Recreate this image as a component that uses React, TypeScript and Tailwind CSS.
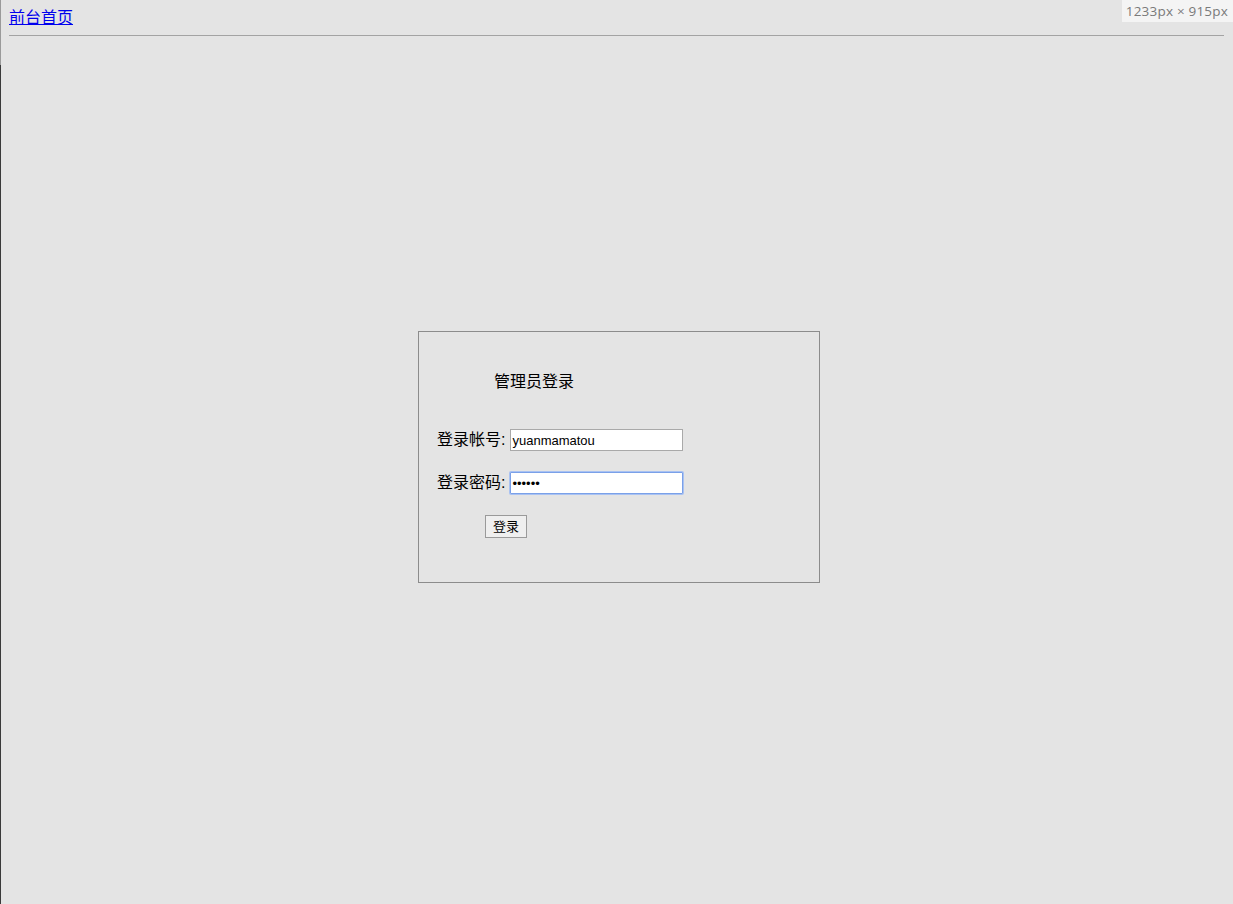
export default function App() {
  return (
    <div
      className="relative min-h-[904px] bg-[#e4e4e4] px-[9px] pt-[8px] text-black"
      style={{ fontFamily: '"Liberation Sans", "Noto Sans CJK SC", sans-serif' }}
    >
      {/* frame edge on the left */}
      <div className="absolute left-0 top-0 h-[65px] w-px bg-[#9a9a9a]" />
      <div className="absolute left-0 top-[65px] bottom-0 w-px bg-[#3a3a3a]" />

      {/* size badge */}
      <div className="absolute right-0 top-0 flex h-[22px] items-center bg-[#f4f4f4] pl-[4px] pr-[5px] text-[13.5px] tracking-[0.2px] text-[#7a7a7a]" style={{ fontFamily: '"Open Sans", sans-serif' }}>
        1233px × 915px
      </div>

      <a href="#" className="block w-fit text-[16px] leading-[19px] text-[#0000ee] underline">
        前台首页
      </a>
      <hr className="mt-[8px] border-t border-[#a3a3a3]" />

      <div className="mt-[295px] flex justify-center pl-[5px]">
        <form
          className="flex w-[402px] flex-col border border-[#8c8c8c] pb-[44px] pt-[41px]"
          onSubmit={(e) => e.preventDefault()}
        >
          <div className="pl-[75px] text-[16px] leading-[18px]">管理员登录</div>

          <div className="mt-[38px] flex items-center pl-[18px]">
            <span className="text-[16px] leading-[22px]">登录帐号:</span>
            <input
              type="text"
              defaultValue="yuanmamatou"
              className="ml-[5px] h-[22px] w-[173px] border border-[#a9a9a9] bg-white px-[1px] text-[13px] outline-none"
            />
          </div>

          <div className="mt-[21px] flex items-center pl-[18px]">
            <span className="text-[16px] leading-[22px]">登录密码:</span>
            <input
              type="password"
              defaultValue="123456"
              className="ml-[5px] h-[22px] w-[173px] rounded-[1px] border border-[#7aa0e8] bg-white px-[1px] text-[13px] outline-none shadow-[0_0_0_1px_#a9c2f2]"
            />
          </div>

          <div className="mt-[20px] pl-[66px]">
            <button
              type="submit"
              className="h-[23px] w-[42px] border border-[#9a9a9a] bg-[#efefef] text-[13px] leading-none"
            >
              登录
            </button>
          </div>
        </form>
      </div>
    </div>
  );
}
